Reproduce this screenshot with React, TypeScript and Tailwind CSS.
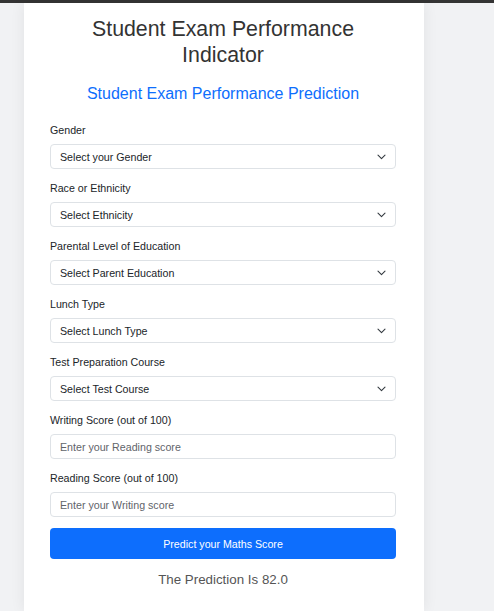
import React from 'react';

const selects = [
  { label: 'Gender', placeholder: 'Select your Gender' },
  { label: 'Race or Ethnicity', placeholder: 'Select Ethnicity' },
  { label: 'Parental Level of Education', placeholder: 'Select Parent Education' },
  { label: 'Lunch Type', placeholder: 'Select Lunch Type' },
  { label: 'Test Preparation Course', placeholder: 'Select Test Course' },
];

const inputs = [
  { label: 'Writing Score (out of 100)', placeholder: 'Enter your Reading score' },
  { label: 'Reading Score (out of 100)', placeholder: 'Enter your Writing score' },
];

const Chevron = () => (
  <svg className="pointer-events-none absolute right-[10px] top-1/2 -translate-y-1/2" width="9" height="6" viewBox="0 0 9 6" fill="none">
    <path d="M1 1.2 4.5 4.6 8 1.2" stroke="#343a40" strokeWidth="1.1" strokeLinecap="round" strokeLinejoin="round" />
  </svg>
);

const SelectField = ({ label, placeholder }: { label: string; placeholder: string }) => (
  <div className="mb-[11px]">
    <label className="mb-[6px] block text-[10.67px] leading-[16px] text-[#212529]">{label}</label>
    <div className="relative">
      <select
        defaultValue=""
        className="block h-[25px] w-full appearance-none rounded-[4px] border border-[#dee2e6] bg-white pl-[9px] pr-[24px] text-[10.67px] text-[#212529] outline-none"
      >
        <option value="" disabled>{placeholder}</option>
      </select>
      <Chevron />
    </div>
  </div>
);

const InputField = ({ label, placeholder }: { label: string; placeholder: string }) => (
  <div className="mb-[11px]">
    <label className="mb-[6px] block text-[10.67px] leading-[16px] text-[#212529]">{label}</label>
    <input
      type="number"
      placeholder={placeholder}
      className="block h-[25px] w-full rounded-[4px] border border-[#dee2e6] bg-white px-[9px] text-[10.67px] text-[#212529] outline-none placeholder:text-[#5f646a]"
    />
  </div>
);

export default function App() {
  return (
    <div className="min-h-[611px] bg-[#f1f2f4] font-['Liberation_Sans',Arial,sans-serif]">
      <div className="h-[3px] bg-[#343434]" />
      <div className="ml-[24px] min-h-[608px] w-[400px] bg-white pb-[20px] pl-[26px] pr-[28px] pt-[14px] shadow-[0_0_14px_rgba(0,0,0,0.07)]">
        <h1 className="text-center text-[21.33px] leading-[25.6px] text-[#333]">
          Student Exam Performance
          <br />
          Indicator
        </h1>
        <h2 className="mt-[16px] text-center text-[16px] leading-[19.2px] text-[#0d6efd]">
          Student Exam Performance Prediction
        </h2>
        <form className="mt-[19px]" onSubmit={e => e.preventDefault()}>
          {selects.map(s => (
            <SelectField key={s.label} label={s.label} placeholder={s.placeholder} />
          ))}
          {inputs.map(i => (
            <InputField key={i.label} label={i.label} placeholder={i.placeholder} />
          ))}
          <button
            type="submit"
            className="block h-[31px] w-full rounded-[4px] bg-[#0d6efd] text-center text-[10.67px] text-white"
          >
            Predict your Maths Score
          </button>
        </form>
        <p className="mt-[11px] text-center text-[13.33px] leading-[20px] text-[#555]">The Prediction Is 82.0</p>
      </div>
    </div>
  );
}
